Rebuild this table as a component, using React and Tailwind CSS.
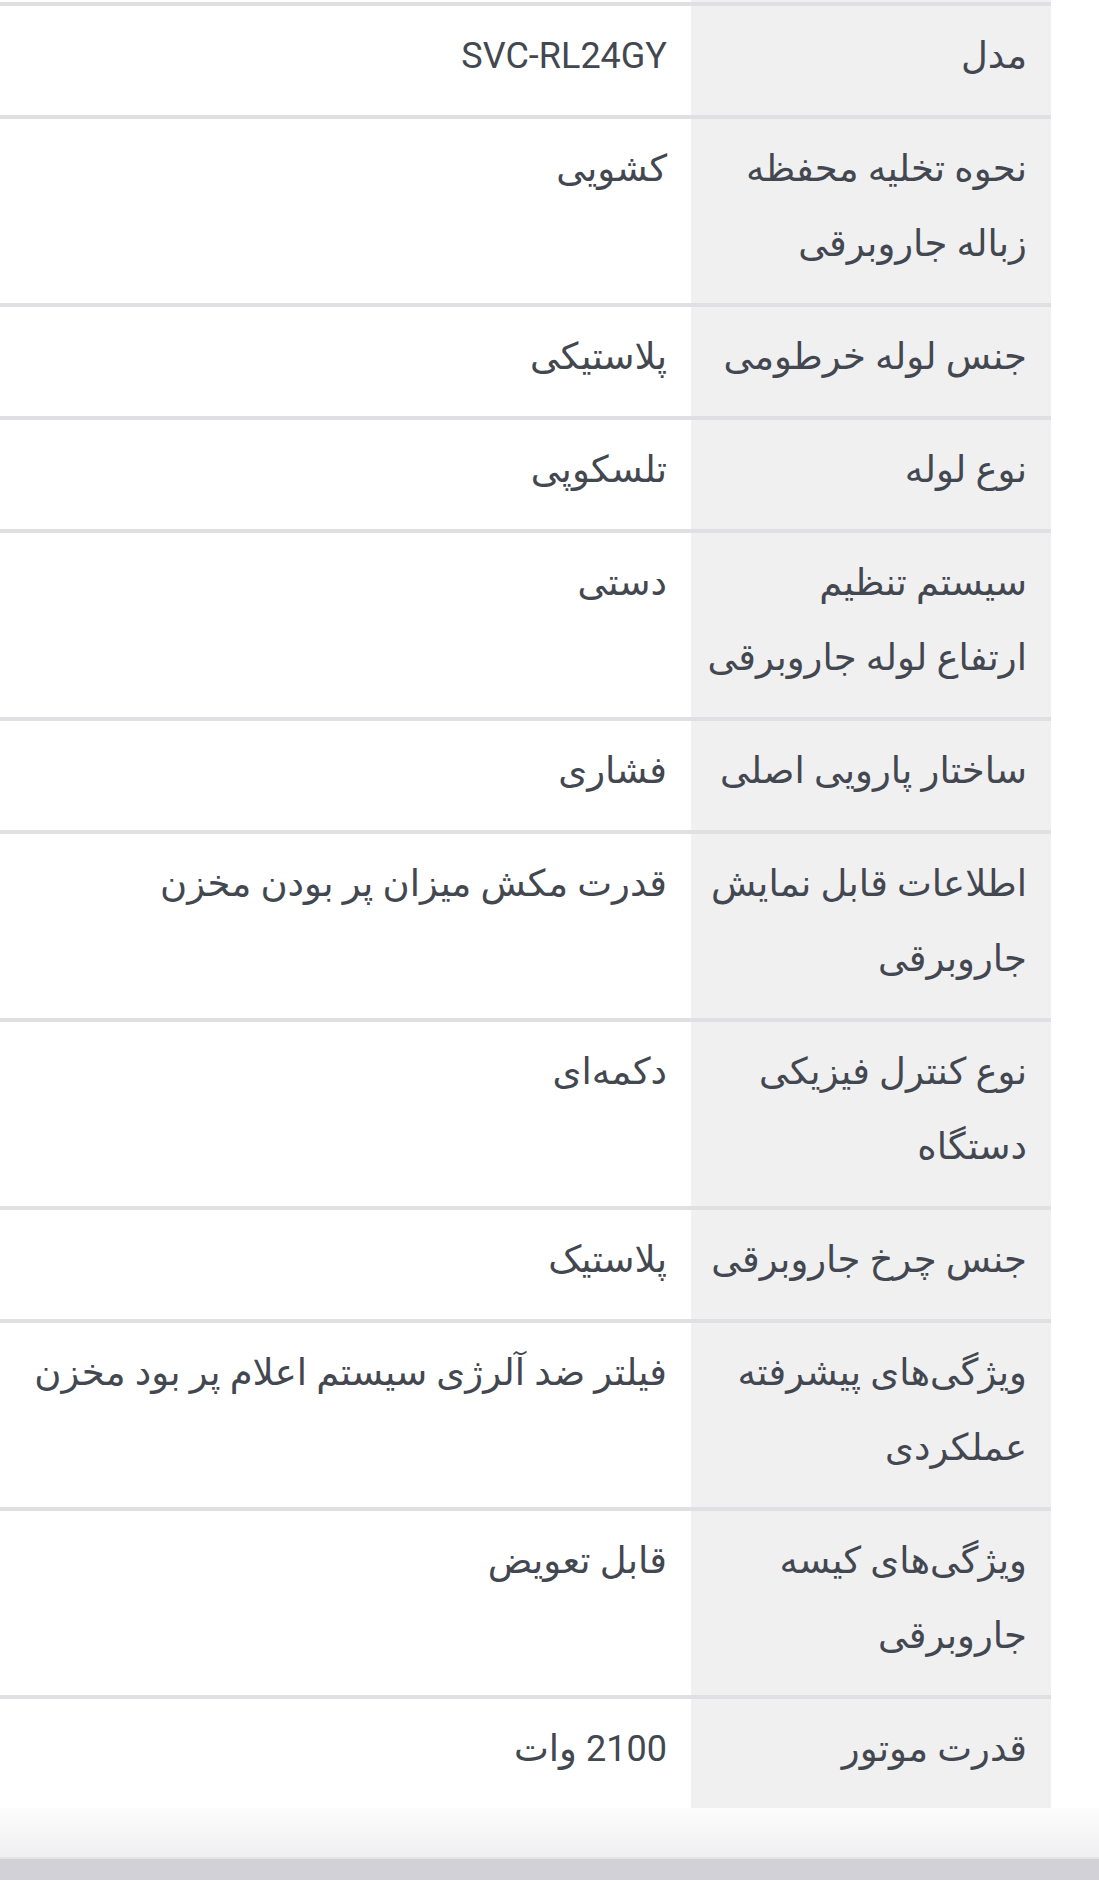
const Latin = ({ children }) => <span className="text-[36px]">{children}</span>;

const specs = [
  { label: ["مدل"], value: <Latin>SVC-RL24GY</Latin> },
  { label: ["نحوه تخلیه محفظه", "زباله جاروبرقی"], value: "کشویی" },
  { label: ["جنس لوله خرطومی"], value: "پلاستیکی" },
  { label: ["نوع لوله"], value: "تلسکوپی" },
  { label: ["سیستم تنظیم", "ارتفاع لوله جاروبرقی"], value: "دستی" },
  { label: ["ساختار پارویی اصلی"], value: "فشاری" },
  { label: ["اطلاعات قابل نمایش", "جاروبرقی"], value: "قدرت مکش میزان پر بودن مخزن" },
  { label: ["نوع کنترل فیزیکی", "دستگاه"], value: "دکمه‌ای" },
  { label: ["جنس چرخ جاروبرقی"], value: "پلاستیک" },
  { label: ["ویژگی‌های پیشرفته", "عملکردی"], value: "فیلتر ضد آلرژی سیستم اعلام پر بود مخزن" },
  { label: ["ویژگی‌های کیسه", "جاروبرقی"], value: "قابل تعویض" },
  { label: ["قدرت موتور"], value: <><Latin>2100</Latin> وات</> },
];

const SpecRow = ({ label, value }) => (
  <div className="flex border-t-4 border-[#e0e0e2]">
    <div className="w-[360px] shrink-0 bg-[#f0f0f1] pt-[12px] pb-[22px] pr-6 pl-3">
      {label.map((line, i) => (
        <div key={i} className="h-[75px] whitespace-nowrap">
          {line}
        </div>
      ))}
    </div>
    <div className="flex-1 bg-white pt-[12px] pb-[22px] px-6 overflow-hidden">
      <div className="h-[75px] whitespace-nowrap">{value}</div>
    </div>
  </div>
);

export default function App() {
  return (
    <div
      dir="rtl"
      className="w-[1099px] h-[1880px] bg-white text-[#424750] text-[37px] leading-[75px] overflow-hidden flex flex-col"
      style={{ fontFamily: 'Roboto, "DejaVu Sans", sans-serif' }}
    >
      {/* table */}
      <div className="pr-12">
        {/* tail of the row above */}
        <div className="flex h-[2px]">
          <div className="w-[360px] bg-[#f0f0f1]" />
          <div className="flex-1 bg-white" />
        </div>
        {specs.map((s, i) => (
          <SpecRow key={i} {...s} />
        ))}
      </div>

      {/* fade into bottom bar */}
      <div className="h-[49px] bg-gradient-to-b from-[#fdfdfd] to-[#efeff1]" />
      <div className="h-[2px] bg-[#e4e3e7]" />
      <div className="flex-1 bg-[#d3d1d8]" />
    </div>
  );
}
